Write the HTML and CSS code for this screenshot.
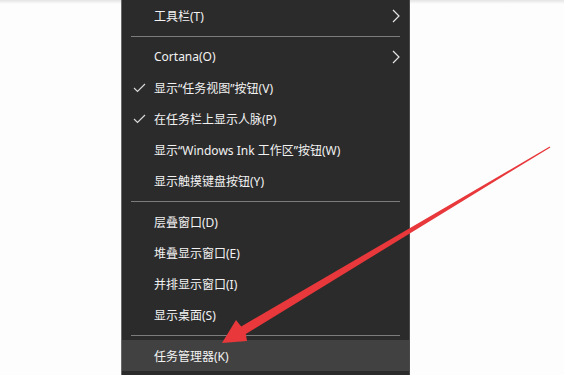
FILE: index.html
```html
<!DOCTYPE html>
<html lang="zh-CN">
<head>
    <meta charset="UTF-8">
    <meta name="viewport" content="width=device-width, initial-scale=1.0">
    <title>任务栏菜单</title>
    <link rel="stylesheet" href="styles.css">
</head>
<body>

    <div class="page">
        <div class="side"></div>

        <!-- Taskbar context menu -->
        <ul class="menu">
            <li class="item">
                <span class="label">工具栏(T)</span>
                <svg class="chevron" width="8" height="14" viewBox="0 0 8 14"><path d="M1 1 L7 7 L1 13" fill="none" stroke="#e6e6e6" stroke-width="1.2"/></svg>
            </li>
            <li class="sep"></li>
            <li class="item">
                <span class="label">Cortana(O)</span>
                <svg class="chevron" width="8" height="14" viewBox="0 0 8 14"><path d="M1 1 L7 7 L1 13" fill="none" stroke="#e6e6e6" stroke-width="1.2"/></svg>
            </li>
            <li class="item">
                <svg class="check" width="13" height="10" viewBox="0 0 13 10"><path d="M1 5 L4.5 8.5 L12 1" fill="none" stroke="#d8d8d8" stroke-width="1.2"/></svg>
                <span class="label">显示“任务视图”按钮(V)</span>
            </li>
            <li class="item">
                <svg class="check" width="13" height="10" viewBox="0 0 13 10"><path d="M1 5 L4.5 8.5 L12 1" fill="none" stroke="#d8d8d8" stroke-width="1.2"/></svg>
                <span class="label">在任务栏上显示人脉(P)</span>
            </li>
            <li class="item"><span class="label">显示“Windows Ink 工作区”按钮(W)</span></li>
            <li class="item"><span class="label">显示触摸键盘按钮(Y)</span></li>
            <li class="sep"></li>
            <li class="item"><span class="label">层叠窗口(D)</span></li>
            <li class="item"><span class="label">堆叠显示窗口(E)</span></li>
            <li class="item"><span class="label">并排显示窗口(I)</span></li>
            <li class="item"><span class="label">显示桌面(S)</span></li>
            <li class="sep"></li>
            <li class="item active"><span class="label">任务管理器(K)</span></li>
        </ul>

        <div class="side"></div>
    </div>

    <!-- Red pointer arrow drawn over the screenshot -->
    <svg class="arrow" width="564" height="375" viewBox="0 0 564 375">
        <polygon points="222,343 236,320 241.2,326.4 549.7,146.6 550.3,147.4 245.8,334.0 247,341" fill="#e8383b"/>
    </svg>

</body>
</html>
```

FILE: styles.css
```css
* {
    margin: 0;
    padding: 0;
    box-sizing: border-box;
}

body {
    font-family: "Noto Sans", "Noto Sans CJK SC", sans-serif;
    background-color: #fdfdfd;
    height: 375px;
    overflow: hidden;
}

.page {
    display: flex;
    height: 375px;
    background: linear-gradient(#e4e4e4, #fdfdfd 4px);
}

.side {
    width: 121px;
    flex-shrink: 0;
}

.side:last-child {
    flex: 1;
}

.menu {
    list-style-type: none;
    width: 289px;
    flex-shrink: 0;
    background-color: #2b2b2b;
    border-left: 1px solid #6a6a6a;
    border-right: 1px solid #4a4a4a;
    color: #f2f2f2;
    font-size: 12px;
}

.item {
    display: flex;
    align-items: center;
    height: 31px;
    padding-left: 32px;
    padding-right: 9px;
    position: relative;
}

.item .label {
    flex: 1;
    white-space: nowrap;
}

.item.active {
    background-color: #414141;
}

.check {
    position: absolute;
    left: 11px;
    top: 11px;
}

.chevron {
    flex-shrink: 0;
}

.sep {
    height: 10px;
    padding: 0 9px;
    display: flex;
    align-items: center;
}

.sep::before {
    content: "";
    display: block;
    width: 100%;
    height: 1px;
    background-color: #7c7c7c;
}

.arrow {
    position: absolute;
    left: 0;
    top: 0;
    pointer-events: none;
}
```
